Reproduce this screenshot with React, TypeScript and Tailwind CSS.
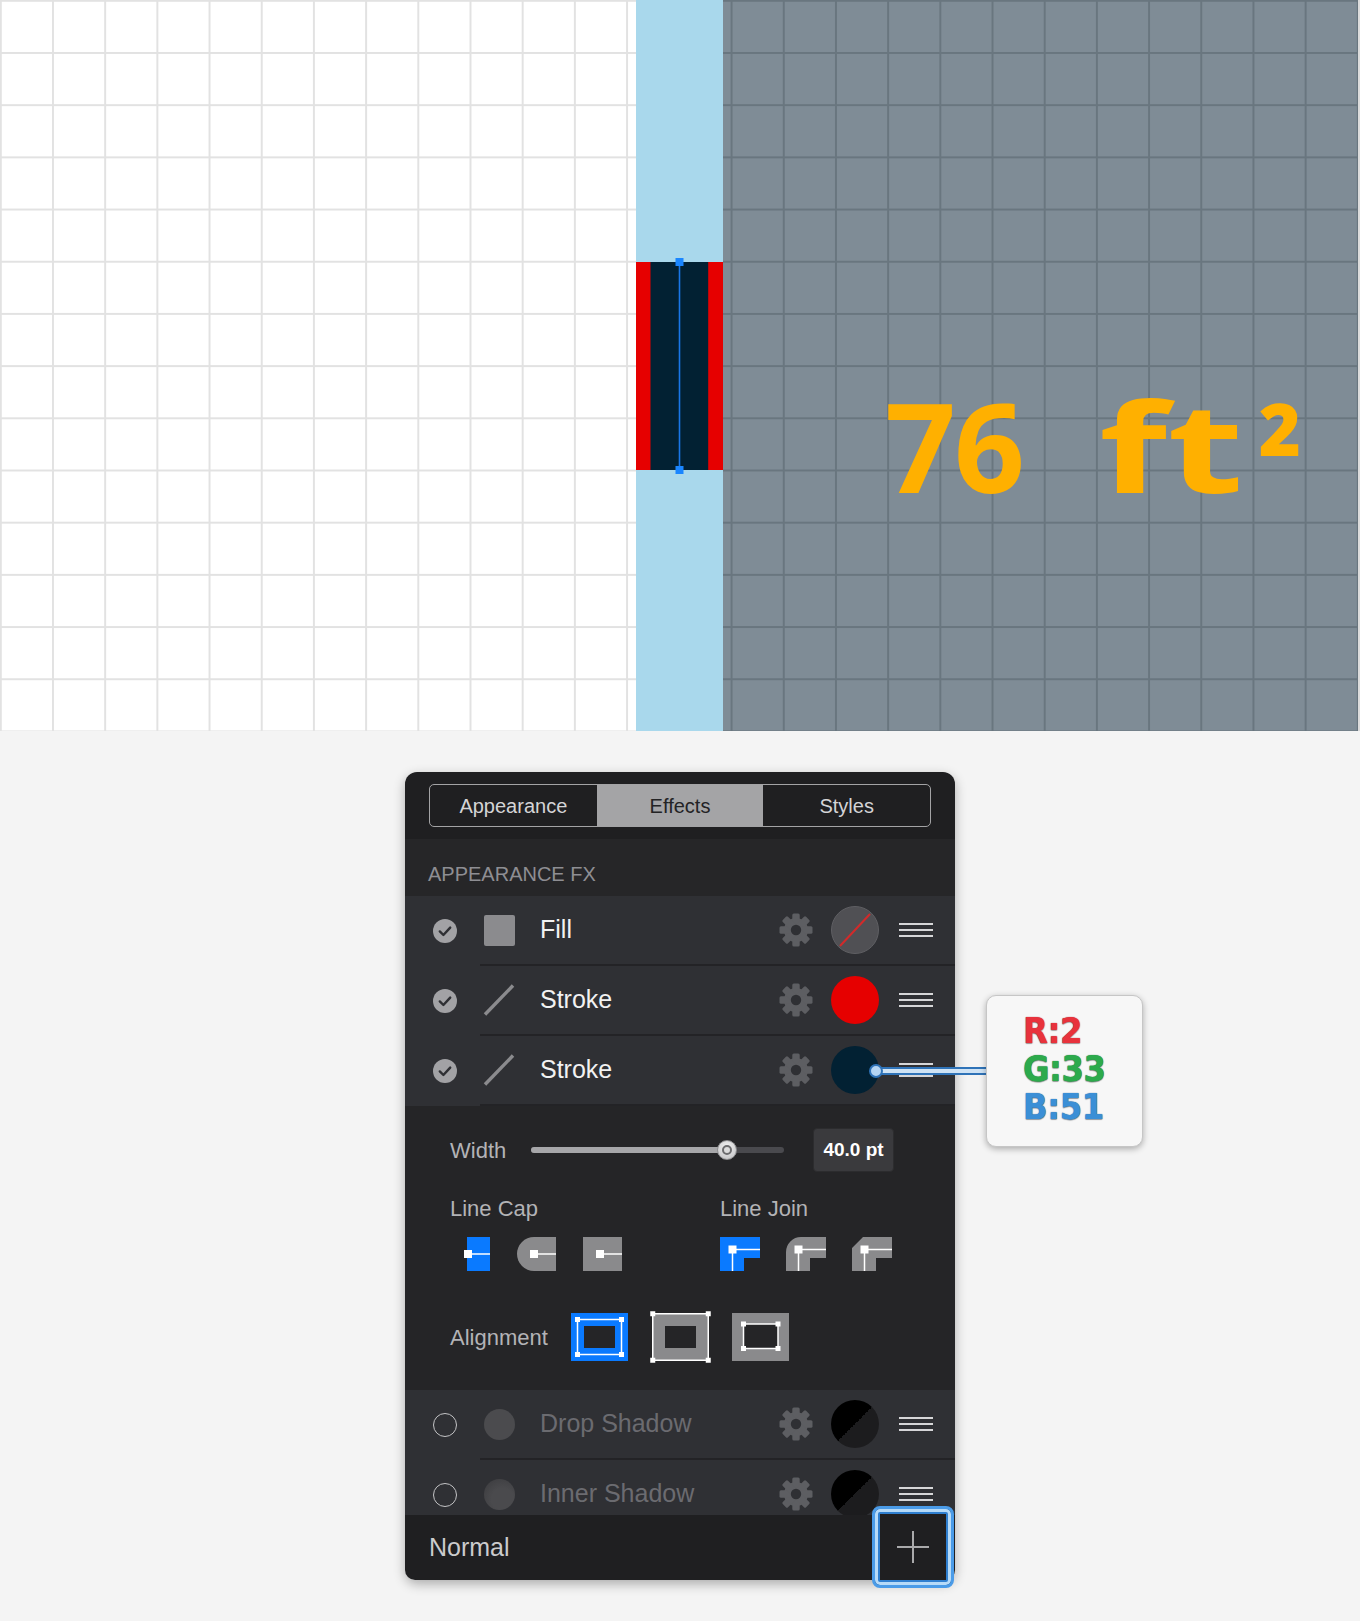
import React from 'react';

const ROW_BG = '#2f3034';

const Check = () => (
  <svg width="24" height="24" viewBox="0 0 24 24">
    <circle cx="12" cy="12" r="12" fill="#a2a2a5" />
    <path d="M6.8 12.4 L10.4 16 L17.2 8.6" fill="none" stroke="#2f3034" strokeWidth="2.4" strokeLinecap="round" strokeLinejoin="round" />
  </svg>
);

const Radio = () => (
  <div className="h-[24px] w-[24px] rounded-full border-[1.5px] border-[#c4c4c6]" />
);

const Gear = () => (
  <svg width="34" height="34" viewBox="0 0 34 34">
    <g fill="#5d5e62">
      <circle cx="17" cy="17" r="12" />
      {[0, 45, 90, 135].map((a) => (
        <rect key={a} x="13.3" y="0.5" width="7.4" height="33" rx="1.5" transform={`rotate(${a} 17 17)`} />
      ))}
    </g>
    <circle cx="17" cy="17" r="5.2" fill={ROW_BG} />
  </svg>
);

const Hamburger = () => (
  <div className="flex w-[34px] flex-col gap-[3.7px]">
    <div className="h-[2px] bg-[#d6d6d8]" />
    <div className="h-[2px] bg-[#d6d6d8]" />
    <div className="h-[2px] bg-[#d6d6d8]" />
  </div>
);

const FillIcon = () => <div className="h-[31px] w-[31px] rounded-[2px] bg-[#8b8b8e]" />;

const StrokeIcon = () => (
  <svg width="32" height="32" viewBox="0 0 32 32">
    <line x1="2" y1="30.5" x2="30" y2="1.5" stroke="#8b8b8e" strokeWidth="3.4" />
  </svg>
);

const ShadowIcon = ({ inner }: { inner?: boolean }) => (
  <div
    className={
      inner
        ? 'h-[31px] w-[31px] rounded-full bg-[radial-gradient(circle_at_60%_65%,#4a4a4d_40%,#3a3a3d_100%)]'
        : 'h-[31px] w-[31px] rounded-full bg-[#4b4b4e]'
    }
  />
);

const NoneSwatch = () => (
  <svg width="48" height="48" viewBox="0 0 48 48">
    <circle cx="24" cy="24" r="23.5" fill="#505054" stroke="#5f5f63" strokeWidth="1" />
    <line x1="9" y1="40" x2="39" y2="8" stroke="#d22a2a" strokeWidth="2" />
  </svg>
);

const ColorSwatch = ({ color }: { color: string }) => (
  <div className="h-[48px] w-[48px] rounded-full" style={{ backgroundColor: color }} />
);

const SplitSwatch = () => (
  <div className="h-[48px] w-[48px] rounded-full bg-[linear-gradient(135deg,#000_50%,#1c1c1e_50%)]" />
);

interface RowProps {
  on: boolean;
  icon: React.ReactNode;
  label: string;
  swatch: React.ReactNode;
}

const Row = ({ on, icon, label, swatch }: RowProps) => (
  <div className="flex h-[70px] shrink-0 bg-[#2f3034]">
    <div className="flex w-[75px] shrink-0 items-center pl-[28px]">{on ? <Check /> : <Radio />}</div>
    <div className="flex flex-1 items-center border-b-2 border-[#232326] pl-[3px] pr-[22px]">
      <div className="flex w-[32px] justify-center">{icon}</div>
      <span className={`ml-[25px] flex-1 text-[25px] ${on ? 'text-[#f2f2f2]' : 'text-[#6b6b70]'}`}>{label}</span>
      <Gear />
      <div className="ml-[18px]">{swatch}</div>
      <div className="ml-[20px]">
        <Hamburger />
      </div>
    </div>
  </div>
);

const BLUE = '#0a7aff';
const GREY = '#8a8a8c';
const DETAIL_BG = '#252527';

const CapIcon = ({ kind }: { kind: 'butt' | 'round' | 'square' }) => (
  <svg width="40" height="34" viewBox="0 0 40 34" className="overflow-visible">
    {kind === 'butt' && <rect x="17" y="0" width="23" height="34" fill={BLUE} />}
    {kind === 'round' && <path d="M40 0H18A17 17 0 0 0 18 34H40Z" fill={GREY} />}
    {kind === 'square' && <rect x="1" y="0" width="39" height="34" fill={GREY} />}
    <line x1="18" y1="17" x2="40" y2="17" stroke="#fff" strokeWidth="1.5" />
    <rect x="14" y="13" width="8" height="8" fill="#fff" />
  </svg>
);

const JoinIcon = ({ kind }: { kind: 'miter' | 'round' | 'bevel' }) => {
  const d =
    kind === 'miter'
      ? 'M0 0H40V21H24V34H0Z'
      : kind === 'round'
        ? 'M0 34V15A15 15 0 0 1 15 0H40V21H24V34Z'
        : 'M0 34V11L11 0H40V21H24V34Z';
  return (
    <svg width="40" height="34" viewBox="0 0 40 34">
      <path d={d} fill={kind === 'miter' ? BLUE : GREY} />
      <line x1="12.5" y1="12.5" x2="12.5" y2="34" stroke="#fff" strokeWidth="1.5" />
      <line x1="12.5" y1="12.5" x2="40" y2="12.5" stroke="#fff" strokeWidth="1.5" />
      <rect x="8.5" y="8.5" width="8" height="8" fill="#fff" />
    </svg>
  );
};

const Corners = ({ x, y, w, h }: { x: number; y: number; w: number; h: number }) => (
  <g fill="#fff">
    <rect x={x - 2.5} y={y - 2.5} width="5" height="5" />
    <rect x={x + w - 2.5} y={y - 2.5} width="5" height="5" />
    <rect x={x - 2.5} y={y + h - 2.5} width="5" height="5" />
    <rect x={x + w - 2.5} y={y + h - 2.5} width="5" height="5" />
  </g>
);

const AlignBox = ({ kind }: { kind: 'inside' | 'center' | 'outside' }) => (
  <svg width="57" height="48" viewBox="0 0 57 48" className="overflow-visible">
    <rect x="0" y="0" width="57" height="48" fill={kind === 'inside' ? BLUE : GREY} />
    {kind === 'inside' && (
      <>
        <rect x="13" y="13" width="31" height="22" fill={DETAIL_BG} />
        <rect x="6.5" y="6.5" width="44" height="35" fill="none" stroke="#fff" strokeWidth="1.5" />
        <Corners x={6.5} y={6.5} w={44} h={35} />
      </>
    )}
    {kind === 'center' && (
      <>
        <rect x="13" y="13" width="31" height="22" fill={DETAIL_BG} />
        <rect x="0.75" y="0.75" width="55.5" height="46.5" fill="none" stroke="#fff" strokeWidth="1.5" />
        <Corners x={0.75} y={0.75} w={55.5} h={46.5} />
      </>
    )}
    {kind === 'outside' && (
      <>
        <rect x="11.5" y="11" width="34.5" height="24.5" fill={DETAIL_BG} stroke="#fff" strokeWidth="1.5" />
        <Corners x={11.5} y={11} w={34.5} h={24.5} />
      </>
    )}
  </svg>
);

const Slider = () => (
  <div className="relative h-[6px] w-[253px] rounded-full bg-[#4a4a4e]">
    <div className="h-full w-[196px] rounded-full bg-[#a7a7a9]" />
    <div className="absolute left-[186px] top-1/2 flex h-[20px] w-[20px] -translate-y-1/2 items-center justify-center rounded-full border border-[#8e8e90] bg-[radial-gradient(circle_at_50%_35%,#f4f4f4,#bdbdbf)]">
      <div className="h-[10px] w-[10px] rounded-full border-2 border-[#6c6c6e] bg-[#dcdcdc]" />
    </div>
  </div>
);

const ArtStroke = () => (
  <svg width="87" height="208" viewBox="0 0 87 208" className="overflow-visible">
    <rect x="0" y="0" width="87" height="208" fill="#e60000" />
    <rect x="14.5" y="0" width="57.7" height="208" fill="#022133" />
    <line x1="43.5" y1="0" x2="43.5" y2="208" stroke="#1976e6" strokeWidth="1.6" />
    <rect x="39.5" y="-4" width="8" height="8" fill="#1a86ff" />
    <rect x="39.5" y="204" width="8" height="8" fill="#1a86ff" />
  </svg>
);

export default function App() {
  return (
    <div className="min-h-[1621px] bg-[#f4f4f4] font-['Liberation_Sans',Arial,sans-serif]">
      {/* canvas */}
      <div className="flex h-[731px] w-full overflow-hidden border-r-2 border-[#dcdcdc]">
        <div className="h-full w-[636px] bg-white bg-[linear-gradient(to_right,#e2e2e2_2px,transparent_2px),linear-gradient(to_bottom,#e2e2e2_2px,transparent_2px)] bg-[size:52.2px_52.2px] bg-[position:52px_52px]" />
        <div className="h-full w-[87px] bg-[#a9d8ec] pt-[262px]">
          <ArtStroke />
        </div>
        <div className="h-full flex-1 bg-[#7f8c96] bg-[linear-gradient(to_right,#69767f_2px,transparent_2px),linear-gradient(to_bottom,#69767f_2px,transparent_2px)] bg-[size:52.2px_52.2px] bg-[position:7.6px_52px] pl-[162px] pt-[383px]">
          <div className="flex items-start whitespace-pre font-['Open_Sans',sans-serif] font-bold leading-none text-[#ffb000]">
            <span className="text-[124px] tracking-[-2px]">76</span>
            <div className="ml-[76px] w-[160px]">
              <span className="inline-block origin-left scale-x-[1.42] text-[124px]">ft</span>
            </div>
            <span className="mt-[9px] text-[72px] font-extrabold">2</span>
          </div>
        </div>
      </div>

      {/* panel */}
      <div className="flex justify-center pt-[41px]">
        <div className="relative w-[550px]">
          <div className="flex flex-col rounded-[12px] shadow-[0_4px_12px_rgba(0,0,0,0.3)]">
            <div className="h-[67px] rounded-t-[12px] bg-[#1f1f21] px-[24px] pt-[12px]">
              <div className="flex h-[43px] overflow-hidden rounded-[5px] border-[1.5px] border-[#a3a3a5] text-[20px]">
                <div className="flex flex-1 items-center justify-center text-[#d4d4d6]">Appearance</div>
                <div className="flex flex-1 items-center justify-center bg-[#a4a4a6] text-[#232325]">Effects</div>
                <div className="flex flex-1 items-center justify-center text-[#d4d4d6]">Styles</div>
              </div>
            </div>

            <div className="flex h-[57px] items-center bg-[#262628] pl-[23px] pt-[12px] text-[20px] text-[#8e8e93]">
              APPEARANCE FX
            </div>

            <Row on icon={<FillIcon />} label="Fill" swatch={<NoneSwatch />} />
            <Row on icon={<StrokeIcon />} label="Stroke" swatch={<ColorSwatch color="#e60000" />} />
            <Row on icon={<StrokeIcon />} label="Stroke" swatch={<ColorSwatch color="#022133" />} />

            <div className="h-[284px] bg-[#252527] pl-[45px] pt-[22px] text-[22px] text-[#b3b3b6]">
              <div className="flex h-[44px] items-center">
                <span className="w-[81px]">Width</span>
                <Slider />
                <div className="ml-[29px] flex h-[44px] w-[81px] items-center justify-center rounded-[4px] border border-[#2c2c2e] bg-[#3a3a3d] text-[19px] font-bold text-white">
                  40.0 pt
                </div>
              </div>
              <div className="mt-[24px] flex">
                <div className="w-[270px]">
                  <div className="leading-[26px]">Line Cap</div>
                  <div className="mt-[15px] flex gap-[26px]">
                    <CapIcon kind="butt" />
                    <CapIcon kind="round" />
                    <CapIcon kind="square" />
                  </div>
                </div>
                <div>
                  <div className="leading-[26px]">Line Join</div>
                  <div className="mt-[15px] flex gap-[26px]">
                    <JoinIcon kind="miter" />
                    <JoinIcon kind="round" />
                    <JoinIcon kind="bevel" />
                  </div>
                </div>
              </div>
              <div className="mt-[42px] flex h-[48px] items-center">
                <span className="w-[121px]">Alignment</span>
                <AlignBox kind="inside" />
                <div className="ml-[24px]">
                  <AlignBox kind="center" />
                </div>
                <div className="ml-[23px]">
                  <AlignBox kind="outside" />
                </div>
              </div>
            </div>

            <div className="flex h-[125px] flex-col overflow-hidden">
              <Row on={false} icon={<ShadowIcon />} label="Drop Shadow" swatch={<SplitSwatch />} />
              <Row on={false} icon={<ShadowIcon inner />} label="Inner Shadow" swatch={<SplitSwatch />} />
            </div>

            <div className="flex h-[65px] items-center rounded-b-[10px] bg-[#1f1f21] pl-[24px] text-[25px] text-[#cbcbcd]">
              Normal
            </div>
          </div>

          {/* add button, highlighted */}
          <div className="absolute left-[467px] top-[734px] flex h-[82px] w-[82px] items-center justify-center rounded-[8px] border-[3px] border-[#4a9be8] bg-[#1f1f21] shadow-[inset_0_0_0_3px_#b6daf8,inset_0_0_0_5px_#2f7fd0]">
            <div className="relative h-[32px] w-[32px]">
              <div className="absolute left-0 top-[15px] h-[1.5px] w-[32px] bg-[#a9a9ab]" />
              <div className="absolute left-[15px] top-0 h-[32px] w-[1.5px] bg-[#a9a9ab]" />
            </div>
          </div>

          {/* colour callout */}
          <div className="absolute left-[471px] top-[295px] h-[8px] w-[110px] border-y-2 border-[#2f73b8] bg-[#cfe3f5]" />
          <div className="absolute left-[464px] top-[292px] h-[14px] w-[14px] rounded-full border-2 border-[#2f73b8] bg-[#b5d5f3]" />
          <div className="absolute left-[581px] top-[223px] h-[152px] w-[157px] rounded-[10px] border border-[#c6c6c6] bg-[#f7f7f7] pl-[36px] pt-[16px] shadow-[0_2px_6px_rgba(0,0,0,0.3)]">
            <div className="font-['DejaVu_Sans_Condensed','DejaVu_Sans',sans-serif] text-[36px] font-bold leading-[38px] tracking-[-0.5px]">
              <div className="text-[#e8323c] [text-shadow:0_0_1px_#9c1118,0_1px_1px_rgba(0,0,0,0.35)]">R:2</div>
              <div className="text-[#2caa4c] [text-shadow:0_0_1px_#146a2a,0_1px_1px_rgba(0,0,0,0.35)]">G:33</div>
              <div className="text-[#3b8fd6] [text-shadow:0_0_1px_#17558f,0_1px_1px_rgba(0,0,0,0.35)]">B:51</div>
            </div>
          </div>
        </div>
      </div>
    </div>
  );
}
